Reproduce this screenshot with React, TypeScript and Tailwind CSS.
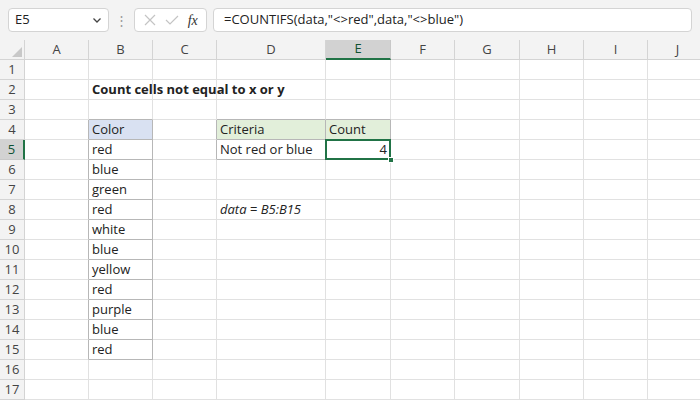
import React from "react";

const cols = ["A", "B", "C", "D", "E", "F", "G", "H", "I", "J"];
const rows = Array.from({ length: 17 }, (_, i) => i + 1);
const colors = ["red", "blue", "green", "red", "white", "blue", "yellow", "red", "purple", "blue", "red"];

const tbl = "#b7b7b7";
const grid = "#e1e1e1";

// returns true if cell (col,row) belongs to a bordered table
function inTable(c: string, r: number) {
  if (c === "B" && r >= 4 && r <= 15) return true;
  if ((c === "D" || c === "E") && (r === 4 || r === 5)) return true;
  return false;
}

function cellContent(c: string, r: number): { text?: string; cls?: string; bg?: string } {
  if (c === "B" && r === 2) return { text: "Count cells not equal to x or y", cls: "font-bold whitespace-nowrap overflow-visible" };
  if (c === "B" && r === 4) return { text: "Color", bg: "#d9e1f2" };
  if (c === "B" && r >= 5 && r <= 15) return { text: colors[r - 5] };
  if (c === "D" && r === 4) return { text: "Criteria", bg: "#e2efda" };
  if (c === "E" && r === 4) return { text: "Count", bg: "#e2efda" };
  if (c === "D" && r === 5) return { text: "Not red or blue", cls: "whitespace-nowrap" };
  if (c === "E" && r === 5) return { text: "4", cls: "justify-end" };
  if (c === "D" && r === 8) return { text: "data = B5:B15", cls: "italic whitespace-nowrap overflow-visible" };
  return {};
}

export default function App() {
  return (
    <div className="w-[700px] h-[400px] bg-white overflow-hidden text-[#222]" style={{ fontFamily: '"Open Sans", "Liberation Sans", sans-serif' }}>
      <div className="h-[40px] flex items-center gap-[6px] px-[8px] bg-[#f3f3f3]">
        <div className="w-[101px] h-[24px] bg-white border border-[#d4d4d4] rounded-[4px] flex items-center justify-between px-[6px] text-[13px]">
          <span>E5</span>
          <svg width="10" height="10" viewBox="0 0 10 10"><path d="M1.5 3.5 L5 7 L8.5 3.5" fill="none" stroke="#444" strokeWidth="1.3" /></svg>
        </div>
        <div className="text-[#999] text-[13px] leading-none">⋮</div>
        <div className="w-[73px] h-[24px] bg-white border border-[#d4d4d4] rounded-[4px] flex items-center justify-around px-[4px]">
          <svg width="14" height="14" viewBox="0 0 14 14"><path d="M2 2 L12 12 M12 2 L2 12" stroke="#c4c4c4" strokeWidth="1.2" /></svg>
          <svg width="14" height="14" viewBox="0 0 14 14"><path d="M1 7 L5 11 L13 3" fill="none" stroke="#c4c4c4" strokeWidth="1.2" /></svg>
          <span className="italic text-[14px] text-[#333]" style={{ fontFamily: '"Liberation Serif", serif' }}>fx</span>
        </div>
        <div className="flex-1 h-[24px] bg-white border border-[#d4d4d4] rounded-[4px] flex items-center px-[10px] text-[13px] whitespace-nowrap">
          =COUNTIFS(data,"&lt;&gt;red",data,"&lt;&gt;blue")
        </div>
      </div>
      <div className="grid grid-cols-[25px_64px_64px_64px_109px_65px_64px_65px_64px_64px_60px] auto-rows-[20px] text-[13px]">
        <div className="bg-[#f3f3f3] border-r border-b border-[#d4d4d4] flex items-end justify-end p-[2px]">
          <div className="w-0 h-0 border-l-[10px] border-l-transparent border-b-[10px] border-b-[#c8c8c8]" />
        </div>
        {cols.map((c) => (
          <div
            key={c}
            className={
              c === "E"
                ? "bg-[#d2d2d2] border-r border-[#c8c8c8] border-b-2 border-b-[#217346] flex items-center justify-center text-[#0f5132]"
                : "bg-[#f3f3f3] border-r border-b border-[#d4d4d4] flex items-center justify-center text-[#444]"
            }
          >
            {c}
          </div>
        ))}
        {rows.map((r) => (
          <React.Fragment key={r}>
            <div
              className={
                r === 5
                  ? "bg-[#d2d2d2] border-r-2 border-r-[#217346] border-b border-[#c8c8c8] flex items-center justify-center text-[#0f5132]"
                  : "bg-[#f3f3f3] border-r border-b border-[#d4d4d4] flex items-center justify-center text-[#444]"
              }
            >
              {r}
            </div>
            {cols.map((c, ci) => {
              const next = cols[ci + 1];
              const here = inTable(c, r);
              const rightT = here || (next !== undefined && inTable(next, r));
              const bottomT = here || inTable(c, r + 1);
              const { text, cls, bg } = cellContent(c, r);
              const sel = c === "E" && r === 5;
              return (
                <div
                  key={c}
                  className={`relative flex items-center px-[3px] border-r border-b ${cls ?? ""}`}
                  style={{
                    borderRightColor: rightT ? tbl : grid,
                    borderBottomColor: bottomT ? tbl : grid,
                    backgroundColor: bg,
                  }}
                >
                  <span className="relative z-10">{text}</span>
                  {sel && (
                    <>
                      <div className="absolute -left-[1px] -top-[1px] -right-[1px] -bottom-[1px] border-2 border-[#217346] z-20" />
                      <div className="absolute -right-[4px] -bottom-[4px] w-[6px] h-[6px] bg-[#217346] border border-white z-30" />
                    </>
                  )}
                </div>
              );
            })}
          </React.Fragment>
        ))}
      </div>
    </div>
  );
}
